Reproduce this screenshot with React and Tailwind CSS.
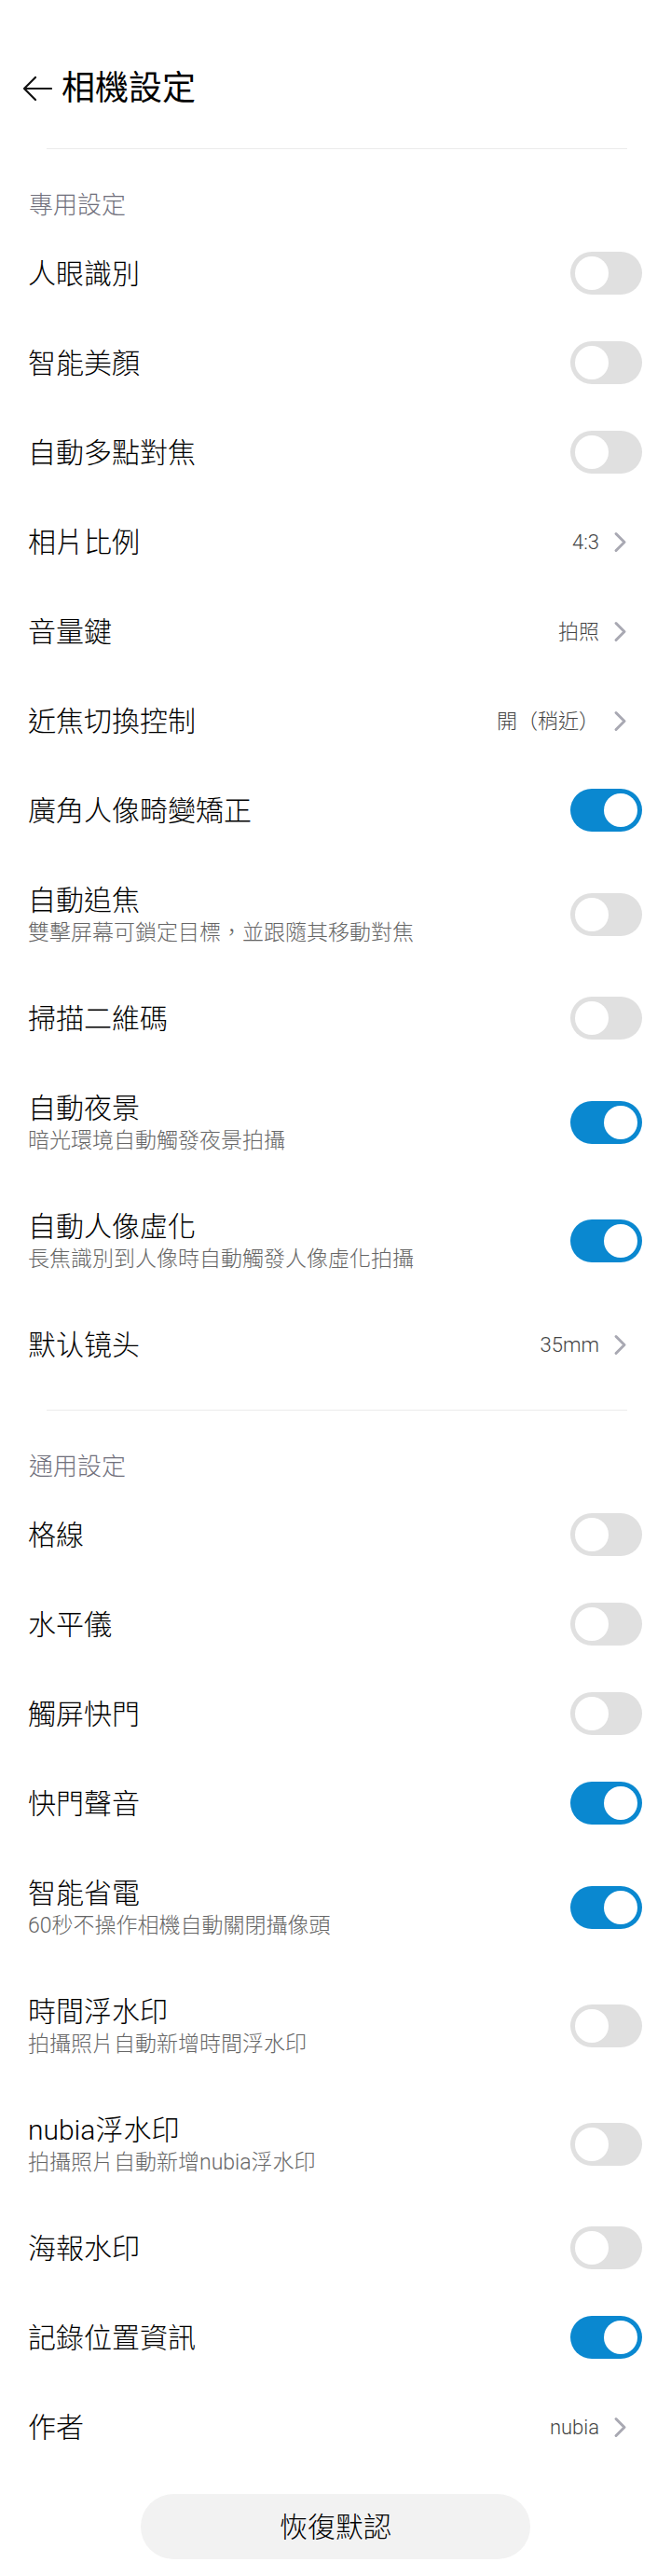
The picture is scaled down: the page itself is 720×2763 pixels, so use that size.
import React from 'react';

const sections = [
  {
    title: '專用設定',
    items: [
      { label: '人眼識別', toggle: false },
      { label: '智能美顏', toggle: false },
      { label: '自動多點對焦', toggle: false },
      { label: '相片比例', value: '4:3' },
      { label: '音量鍵', value: '拍照' },
      { label: '近焦切換控制', value: '開（稍近）' },
      { label: '廣角人像畸變矯正', toggle: true },
      { label: '自動追焦', sub: '雙擊屏幕可鎖定目標，並跟隨其移動對焦', toggle: false },
      { label: '掃描二維碼', toggle: false },
      { label: '自動夜景', sub: '暗光環境自動觸發夜景拍攝', toggle: true },
      { label: '自動人像虛化', sub: '長焦識別到人像時自動觸發人像虛化拍攝', toggle: true },
      { label: '默认镜头', value: '35mm' },
    ],
  },
  {
    title: '通用設定',
    items: [
      { label: '格線', toggle: false },
      { label: '水平儀', toggle: false },
      { label: '觸屏快門', toggle: false },
      { label: '快門聲音', toggle: true },
      { label: '智能省電', sub: '60秒不操作相機自動關閉攝像頭', toggle: true },
      { label: '時間浮水印', sub: '拍攝照片自動新增時間浮水印', toggle: false },
      { label: 'nubia浮水印', sub: '拍攝照片自動新增nubia浮水印', toggle: false },
      { label: '海報水印', toggle: false },
      { label: '記錄位置資訊', toggle: true },
      { label: '作者', value: 'nubia' },
    ],
  },
];

const Toggle = ({ on }) => (
  <div
    className={`w-[77px] h-[46px] rounded-full flex items-center px-[5px] shrink-0 ${
      on ? 'bg-[#0a88d0] justify-end' : 'bg-[#e0e0e0] justify-start'
    }`}
  >
    <div className="w-[36px] h-[36px] rounded-full bg-white" />
  </div>
);

const Chevron = () => (
  <svg width="15" height="23" viewBox="0 0 15 23" fill="none">
    <path d="M3 2.5 L12 11.5 L3 20.5" stroke="#a9a9b3" strokeWidth="3" strokeLinecap="round" strokeLinejoin="round" />
  </svg>
);

const Row = ({ item }) => (
  <div
    className={`flex items-center justify-between pl-[30px] pr-[31px] ${
      item.sub ? 'h-[127px]' : 'h-[96px]'
    }`}
  >
    <div className="flex flex-col pt-[2px]">
      <span className="text-[30px] leading-[38px] font-light text-black">{item.label}</span>
      {item.sub && <span className="text-[23px] leading-[32px] font-light text-[#666666]">{item.sub}</span>}
    </div>
    {item.value !== undefined ? (
      <div className="flex items-center gap-[15px] mr-[16px]">
        <span className="text-[22px] font-light text-[#444444]">{item.value}</span>
        <Chevron />
      </div>
    ) : (
      <Toggle on={item.toggle} />
    )}
  </div>
);

export default function App() {
  return (
    <div className="w-[720px] bg-white font-['Roboto','Noto_Sans_CJK_TC',sans-serif]">
      {/* header */}
      <div className="flex items-center gap-[10px] pl-[24px] pt-[65px] h-[125px]">
        <svg width="32" height="32" viewBox="0 0 32 32" fill="none">
          <path d="M31 16 H2 M14 4 L2 16 L14 28" stroke="#111" strokeWidth="2.2" strokeLinecap="round" strokeLinejoin="round" />
        </svg>
        <h1 className="text-[36px] leading-[60px] text-black">相機設定</h1>
      </div>

      {sections.map((section, i) => (
        <div key={section.title}>
          <div className={`h-px bg-[#ebebeb] ml-[50px] mr-[47px] ${i === 0 ? 'mt-[34px]' : 'mt-[22px]'}`} />
          <div className="h-[85px] pt-[42px] pl-[31px]">
            <span className="text-[26px] leading-[36px] font-light text-[#70707c]">{section.title}</span>
          </div>
          {section.items.map((item) => (
            <Row key={item.label} item={item} />
          ))}
        </div>
      ))}

      <div className="pt-[24px] pb-[18px] flex justify-center">
        <button className="w-[418px] h-[70px] rounded-full bg-[#f2f2f2] text-[30px] font-light text-black">恢復默認</button>
      </div>
    </div>
  );
}
